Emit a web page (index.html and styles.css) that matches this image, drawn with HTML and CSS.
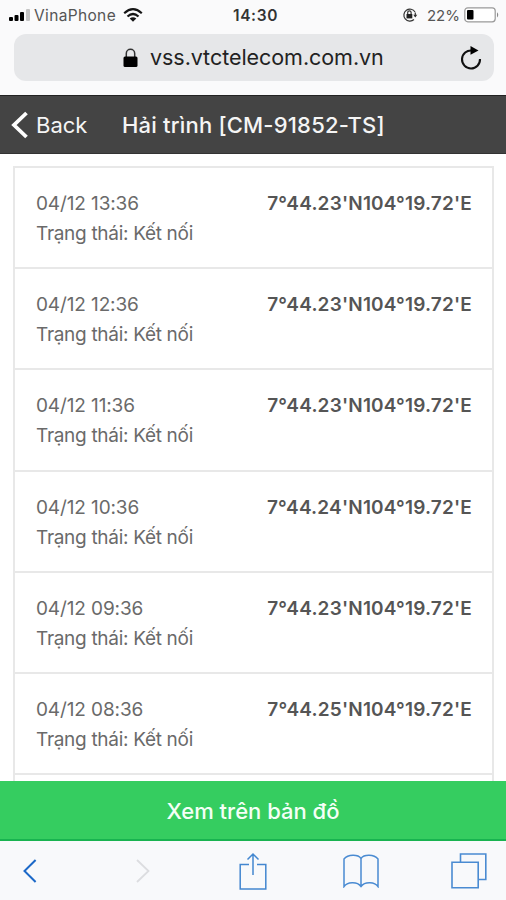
FILE: index.html
```html
<!DOCTYPE html>
<html lang="vi">
<head>
<meta charset="utf-8">
<title>Hải trình</title>
<link rel="stylesheet" href="styles.css">
</head>
<body>
<div class="screen">
  <header class="browser">
    <div class="status">
      <div class="carrier">
        <svg width="22" height="14" viewBox="0 0 22 14"><rect x="0" y="9" width="4" height="4" rx="1"/><rect x="5.500" y="7" width="4" height="6" rx="1"/><rect x="11" y="4" width="4" height="9" rx="1"/><rect x="17" y="1" width="4" height="12" rx="1" fill="#c4c4c4"/></svg>
        <span class="operator">VinaPhone</span>
        <svg width="20" height="14" viewBox="0 0 20 14" fill="none" stroke="#151515" stroke-width="2.200"><path d="M1.200 5.200Q10-2.800 18.800 5.200M4.500 8.500Q10 3.500 15.500 8.500"/><path d="M6.700 10.500Q10 7.800 13.300 10.500L10 13.800Z" fill="#151515" stroke="none"/></svg>
      </div>
      <span class="clock">14:30</span>
      <div class="power">
        <svg width="16" height="14" viewBox="0 0 16 14" fill="none" stroke="#333" stroke-width="1.200"><path d="M13 4A6 6 0 1 0 12 11.500M13.300 4.500V8.500"/><path d="M11.300 6.700h4l-2 2.700z" fill="#333" stroke="none"/><path d="M5.700 6V4.500a1.700 1.700 0 0 1 3.400 0V6"/><rect x="4.500" y="6" width="5.800" height="4.400" fill="#222" stroke="none"/></svg>
        <span class="percent">22%</span>
        <svg width="36" height="16" viewBox="0 0 36 16"><rect x=".8" y=".8" width="30.400" height="14" rx="3" fill="#fff" stroke="#999" stroke-width="1.200"/><rect x="3" y="3" width="6.500" height="9.500" rx="1"/><path d="M33 5.200q2.500 2.600 0 5.200z" fill="#888"/></svg>
      </div>
    </div>
    <div class="address">
      <svg width="15" height="20" viewBox="0 0 15 20"><path d="M3.300 9V5.500a4.200 4.200 0 0 1 8.400 0V9" fill="none" stroke="#333" stroke-width="1.500"/><rect x=".5" y="8.500" width="14" height="10.500" rx="1.500"/></svg>
      <span class="url">vss.vtctelecom.com.vn</span>
      <svg class="reload" width="22" height="24" viewBox="0 0 22 24"><path d="M12 4.500A9 9 0 1 0 20 13" fill="none" stroke="#111" stroke-width="2.100"/><path d="M10.500 0 18.500 4.600 10.500 8.800Z"/></svg>
    </div>
  </header>
  <nav class="titlebar">
    <svg width="18" height="28" viewBox="0 0 18 28"><path d="M15.500 2 3 14l12.500 12" fill="none" stroke="#fff" stroke-width="3.800"/></svg>
    <span class="back">Back</span>
    <h1 class="title">Hải trình [CM-91852-TS]</h1>
  </nav>
  <main class="content">
    <ul class="list">
      <li class="row"><div><p class="time">04/12 13:36</p><p class="state">Trạng thái: Kết nối</p></div><b class="position">7°44.23'N104°19.72'E</b></li>
      <li class="row"><div><p class="time">04/12 12:36</p><p class="state">Trạng thái: Kết nối</p></div><b class="position">7°44.23'N104°19.72'E</b></li>
      <li class="row"><div><p class="time">04/12 11:36</p><p class="state">Trạng thái: Kết nối</p></div><b class="position">7°44.23'N104°19.72'E</b></li>
      <li class="row"><div><p class="time">04/12 10:36</p><p class="state">Trạng thái: Kết nối</p></div><b class="position">7°44.24'N104°19.72'E</b></li>
      <li class="row"><div><p class="time">04/12 09:36</p><p class="state">Trạng thái: Kết nối</p></div><b class="position">7°44.23'N104°19.72'E</b></li>
      <li class="row"><div><p class="time">04/12 08:36</p><p class="state">Trạng thái: Kết nối</p></div><b class="position">7°44.25'N104°19.72'E</b></li>
      <li class="row"></li>
    </ul>
  </main>
  <button class="map">Xem trên bản đồ</button>
  <footer class="toolbar">
    <svg width="14" height="24" viewBox="0 0 14 24" stroke="#1c69c8" stroke-width="2"><path d="M12.600 1 1.500 12l11.100 11"/></svg>
    <svg class="forward" width="14" height="24" viewBox="0 0 14 24" stroke="#dcdde0" stroke-width="1.800"><path d="M1 1l11.500 11L1 23"/></svg>
    <svg class="share" width="28" height="38" viewBox="0 0 28 38" stroke="#4387d0" stroke-width="1.500"><path d="M10 12.500H1.200V37h25.600V12.500H18M14 23V2M8.500 7.500 14 2l5.500 5.500"/></svg>
    <svg class="bookmarks" width="36" height="34" viewBox="0 0 36 34" stroke="#4a8bd2" stroke-width="1.500"><path d="M18 4.500C15 .2 5 .2 1 5V32.500C4 28 14 27 18 32.500C22 27 32 28 35 32.500V5C31 .2 21 .2 18 4.500V32.500"/></svg>
    <svg class="tabs" width="36" height="36" viewBox="0 0 36 36" stroke="#4a8bd2" stroke-width="1.600"><path d="M9.500 9V1H34.800V26.500H27.500M1 9.200H27.200V34.800H1Z"/></svg>
  </footer>
</div>
</body>
</html>
```
FILE: styles.css
```css
* { box-sizing: border-box; margin: 0; padding: 0; }
body { font-family: Inter, "Liberation Sans", sans-serif; background: #fff; }
svg { display: block; flex: none; }
span, h1, b, p { white-space: nowrap; }
.screen { display: flex; flex-direction: column; width: 506px; height: 900px; overflow: hidden; }
.browser { flex: none; height: 96px; background: #fafafb; border-bottom: 1px solid #222; }
.status { display: grid; grid-template-columns: 1fr auto 1fr; align-items: center; height: 30px; padding: 0 6px 0 9px; }
.carrier, .power { display: flex; align-items: center; }
.operator { width: 82px; margin: 0 7px 0 3px; font-size: 15.500px; color: #555; letter-spacing: .35px; }
.clock { margin-left: 2px; font-size: 15.500px; font-weight: 600; color: #333; letter-spacing: .6px; }
.power { justify-content: flex-end; }
.percent { margin: 0 4px 0 9px; font-size: 15px; color: #555; }
.address { display: flex; align-items: center; height: 47px; margin: 4px 12px 0 14px; padding: 0 12px 0 109px; border-radius: 12px; background: #e6e7e9; }
.url { margin: -2px 0 0 12px; font-size: 21.500px; color: #222; letter-spacing: -.05px; }
.reload { margin-left: auto; }
.titlebar { flex: none; display: flex; align-items: center; height: 58px; padding-left: 11px; background: #444; border-bottom: 1px solid #333; color: #f5f5f5; }
.back { width: 78px; margin-left: 7px; font-size: 22px; }
.title { margin-left: 8px; font-size: 22px; font-weight: 500; letter-spacing: .2px; }
.content { flex: 1; min-height: 0; padding: 12px 12px 0 13px; overflow: hidden; }
.list { list-style: none; border: 2px solid #e8e8e8; border-bottom: 0; }
.row { display: flex; justify-content: space-between; height: 101.200px; padding: 21px 20px 0 21px; border-bottom: 2px solid #e8e8e8; color: #6a6a6a; }
.time, .state { font-size: 19px; line-height: 30px; letter-spacing: -.12px; }
.state { letter-spacing: -.3px; }
.position { font-size: 19px; font-weight: 600; line-height: 30px; letter-spacing: .18px; color: #555; }
.map { flex: none; height: 60px; padding-top: 2px; border: 0; border-bottom: 2px solid #18b350; background: #35cd60; color: #f4fff6; font: 500 22px Inter, sans-serif; }
.toolbar { flex: none; display: flex; align-items: center; height: 59px; padding-left: 23px; background: #f8f9fb; }
.toolbar svg { fill: none; }
.forward { margin-left: 99px; }
.share { margin-left: 89px; }
.bookmarks { margin-left: 76px; }
.tabs { margin-left: 72px; }
```
